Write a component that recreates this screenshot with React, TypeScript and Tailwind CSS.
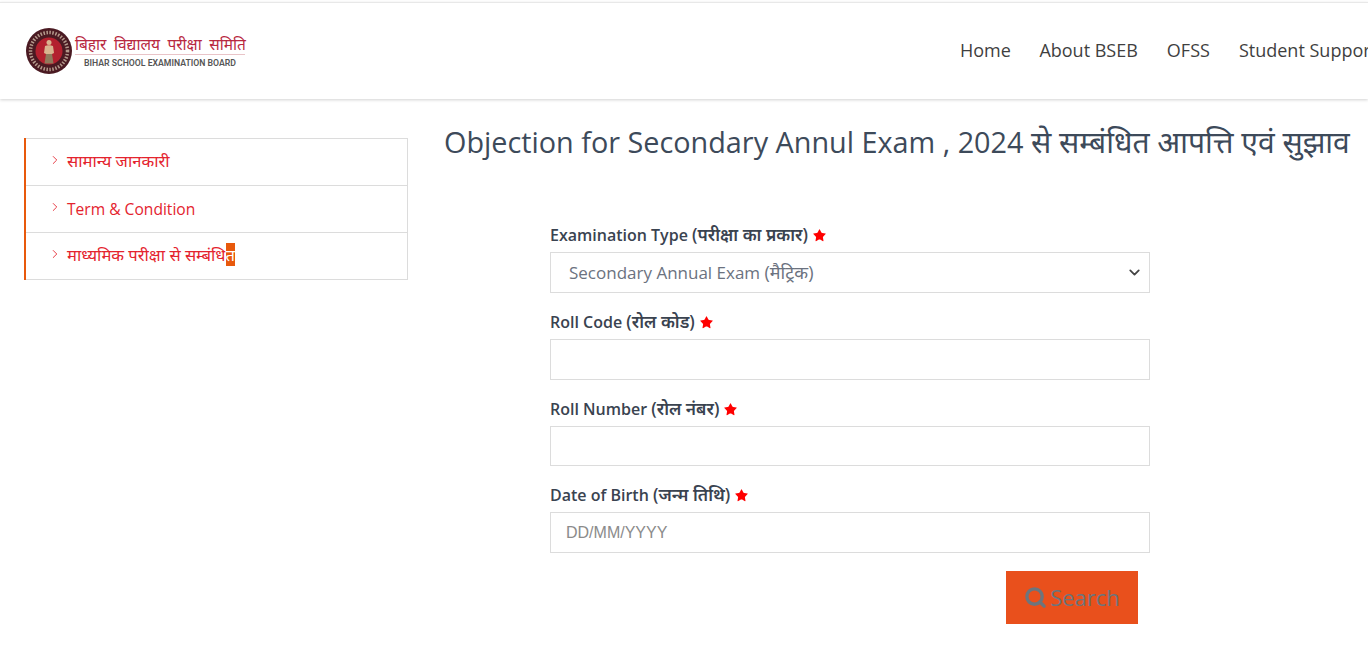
import { ChevronDown, ChevronRight, Search, Star } from "lucide-react";

const inputClass = "block w-full border border-[#dcdcdc] bg-white px-[15px] text-[16px] outline-none";

const Label = ({ text, hindi }: { text: string; hindi: string }) => (
  <label className="flex items-center h-[24px] text-[16px] font-semibold leading-6 text-[#3a4350] whitespace-pre">
    {text} <span className="text-[17.300px]">{hindi}</span>
    <Star className="ml-[4px] w-[15px] h-[15px] text-[#ff0000]" fill="#ff0000" strokeWidth={0} />
  </label>
);

const SideRow = ({ children, last }: { children: React.ReactNode; last?: boolean }) => (
  <li className={`flex items-center pl-[22px] text-[#e4232e] ${last ? "h-[46px]" : "h-[47px] border-b border-[#dcdcdc]"}`}>
    <ChevronRight className="w-[14px] h-[14px] mr-[5px] -mt-[5px] text-[#e4232e]" strokeWidth={1.5} />
    {children}
  </li>
);

const Seal = () => (
  <svg width="46" height="46" viewBox="0 0 46 46" className="shrink-0">
    <circle cx="23" cy="23" r="23" fill="#4a1a22" />
    <circle cx="23" cy="23" r="18.500" fill="none" stroke="#b49a8c" strokeWidth="3.500" strokeDasharray="1.500 1.500" />
    <circle cx="23" cy="23" r="13.500" fill="#b3202e" />
    <circle cx="23" cy="14.500" r="2.500" fill="#d9b48f" />
    <path d="M19 18c2-1 6-1 8 0l1 7-2 1v9h-6v-9l-2-1z" fill="#d9b48f" />
    <path d="M20 26h6l1.500 9.500h-9z" fill="#8f7a5c" />
  </svg>
);

export default function App() {
  return (
    <div className="w-[1368px] h-[664px] overflow-hidden bg-white font-['Open_Sans','Noto_Sans',sans-serif]">
      {/* Header */}
      <header className="mt-[2px] h-[97px] flex items-center justify-between border-t border-[#e8e8e8] shadow-[0_1px_3px_rgba(0,0,0,0.18)] pl-[26px]">
        <div className="flex items-center gap-[3px]">
          <Seal />
          <div className="flex flex-col items-center w-[170px] mt-[1px]">
            <div className="w-full text-center text-[#b8283f] text-[15.500px] leading-[20px] [word-spacing:3.500px] whitespace-nowrap border-b border-[#e9c4c8] font-['Noto_Sans',sans-serif]">
              बिहार विद्यालय परीक्षा समिति
            </div>
            <div className="mt-[2px] text-[#555] text-[8.700px] leading-[12px] font-semibold whitespace-nowrap font-['Roboto',sans-serif]">
              BIHAR SCHOOL EXAMINATION BOARD
            </div>
          </div>
        </div>
        <nav className="flex gap-[29px] text-[18px] text-[#3f3f3f] whitespace-nowrap shrink-0 w-[408px] -mt-[1px]">
          <a>Home</a>
          <a className="-ml-[0.500px]">About BSEB</a>
          <a>OFSS</a>
          <a>Student Support</a>
        </nav>
      </header>

      <div className="flex">
        {/* Sidebar */}
        <aside className="ml-[24px] mt-[39px] w-[384px] h-[142px] shrink-0 border-l-[2px] border-[#e8590c]">
          <ul className="border border-l-0 border-[#dcdcdc]">
            <SideRow>
              <span className="text-[16.600px] -mt-[2px]">सामान्य जानकारी</span>
            </SideRow>
            <SideRow>
              <span className="text-[15.600px] mt-[1px]">Term &amp; Condition</span>
            </SideRow>
            <SideRow last>
              <span className="text-[16.600px] -mt-[2px]">
                माध्यमिक परीक्षा से सम्बंधि
                <span className="bg-[#e8590c] text-white">त</span>
              </span>
            </SideRow>
          </ul>
        </aside>

        {/* Main */}
        <main className="ml-[37px] flex-1 min-w-0">
          <h1 className="mt-[22px] h-[42px] text-[28.800px] leading-[42px] text-[#3d4a5a] whitespace-nowrap -ml-[1px]">
            Objection for Secondary Annul Exam , 2024 <span className="text-[30px]">से सम्बंधित आपत्ति एवं सुझाव</span>
          </h1>
          <form className="ml-[105px] mt-[60px] w-[600px]">
            <Label text="Examination Type" hindi="(परीक्षा का प्रकार)" />
            <div className={`${inputClass} h-[41px] mt-[5px] pl-[18px] flex items-center justify-between pr-[6px] text-[#6b7280]`}>
              <span className="whitespace-pre -mt-[1px]">
                <span className="text-[17px]">Secondary Annual Exam </span>
                <span className="text-[18px]">(मैट्रिक)</span>
              </span>
              <ChevronDown className="w-[17px] h-[17px] text-[#444]" strokeWidth={2.5} />
            </div>
            <div className="mt-[17px]">
              <Label text="Roll Code" hindi="(रोल कोड)" />
              <input className={`${inputClass} h-[41px] mt-[5px]`} />
            </div>
            <div className="mt-[17px]">
              <Label text="Roll Number" hindi="(रोल नंबर)" />
              <input className={`${inputClass} h-[40px] mt-[5px]`} />
            </div>
            <div className="mt-[17px]">
              <Label text="Date of Birth" hindi="(जन्म तिथि)" />
              <input
                placeholder="DD/MM/YYYY"
                className={`${inputClass} h-[41px] mt-[5px] font-['Liberation_Sans',sans-serif] placeholder:text-[#8b8b8b]`}
              />
            </div>
            <div className="flex justify-end mt-[18px] pr-[12px]">
              <button
                type="button"
                className="w-[132px] h-[53px] bg-[#e9501c] flex items-center justify-center gap-[3px] text-[#6c757d] text-[22px]"
              >
                <Search className="w-[23px] h-[23px]" strokeWidth={3.5} />
                Search
              </button>
            </div>
          </form>
        </main>
      </div>
    </div>
  );
}
